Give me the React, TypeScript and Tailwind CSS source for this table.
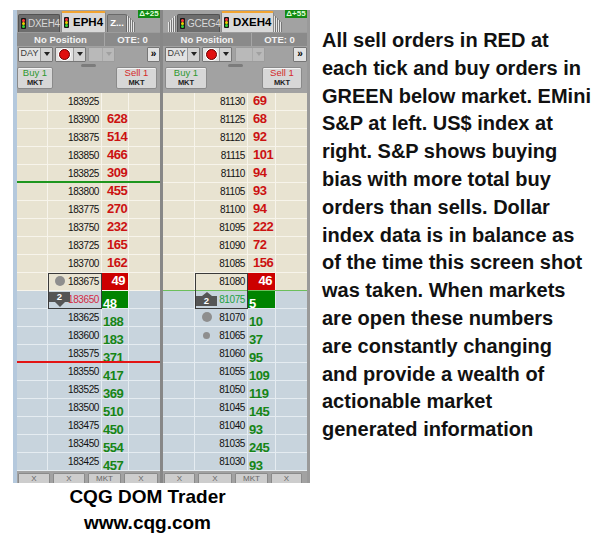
import React from "react";
import clsx from "clsx";

type Level = [string, string];

type Deco = {
  circle?: "lg" | "sm";
  badge?: "up" | "down";
  priceCls?: string;
  line?: string;
};

const ES: Level[] = [
  ["183925", ""],
  ["183900", "628"],
  ["183875", "514"],
  ["183850", "466"],
  ["183825", "309"],
  ["183800", "455"],
  ["183775", "270"],
  ["183750", "232"],
  ["183725", "165"],
  ["183700", "162"],
  ["183675", "49"],
  ["183650", "48"],
  ["183625", "188"],
  ["183600", "183"],
  ["183575", "371"],
  ["183550", "417"],
  ["183525", "369"],
  ["183500", "510"],
  ["183475", "450"],
  ["183450", "554"],
  ["183425", "457"],
];

const DX: Level[] = [
  ["81130", "69"],
  ["81125", "68"],
  ["81120", "92"],
  ["81115", "101"],
  ["81110", "94"],
  ["81105", "93"],
  ["81100", "94"],
  ["81095", "222"],
  ["81090", "72"],
  ["81085", "156"],
  ["81080", "46"],
  ["81075", "5"],
  ["81070", "10"],
  ["81065", "37"],
  ["81060", "95"],
  ["81055", "109"],
  ["81050", "119"],
  ["81045", "145"],
  ["81040", "93"],
  ["81035", "245"],
  ["81030", "93"],
];

const ES_DECO: Record<number, Deco> = {
  4: { line: "h-[2px] bg-[#1e961e]" },
  10: { circle: "lg" },
  11: { badge: "down", priceCls: "text-[#d42a44]" },
  14: { line: "h-[2px] bg-[#e31414]" },
};

const DX_DECO: Record<number, Deco> = {
  10: { line: "h-[1.5px] bg-[#6cbf5c]" },
  11: { badge: "up", priceCls: "text-[#23a043]" },
  12: { circle: "lg" },
  13: { circle: "sm" },
};

const NOTE = [
  "All sell orders in RED at",
  "each tick and buy orders in",
  "GREEN below market. EMini",
  "S&P at left. US$ index at",
  "right. S&P shows buying",
  "bias with more total buy",
  "orders than sells. Dollar",
  "index data is in balance as",
  "of the time this screen shot",
  "was taken. When markets",
  "are open these numbers",
  "are constantly changing",
  "and provide a wealth of",
  "actionable market",
  "generated information",
];

function Light() {
  return (
    <span className="flex h-[11px] w-[5px] shrink-0 flex-col items-center justify-between rounded-[1px] bg-[#161616] py-[1px]">
      <span className="h-[3px] w-[3px] rounded-full bg-[#ff3a3a]" />
      <span className="h-[3px] w-[3px] rounded-full bg-[#eed000]" />
      <span className="h-[3px] w-[3px] rounded-full bg-[#35d035]" />
    </span>
  );
}

function Tab({ label, active, w }: { label: string; active?: boolean; w: string }) {
  if (active) {
    return (
      <div
        className={clsx(
          w,
          "ml-[1px] flex h-[21px] items-center gap-[4px] rounded-t-[2px] border-x border-t-2 border-x-[#8a8a8a] border-t-[#f2a431] bg-[#d9d9d9] pl-[2px] text-[11.5px] font-bold text-black"
        )}
      >
        <Light />
        {label}
      </div>
    );
  }
  return (
    <div
      className={clsx(
        w,
        "ml-[1px] flex h-[18px] items-center gap-[2px] rounded-t-[2px] border border-b-0 border-[#525252] bg-[#6d6d6d] pl-[2px] text-[10px] tracking-[-0.3px] text-[#d8d8d8]"
      )}
    >
      <Light />
      {label}
    </div>
  );
}

function Stack({ up }: { up?: boolean }) {
  const hs = ["h-[16px]", "h-[14px]", "h-[12px]", "h-[10px]"];
  return (
    <div className="flex items-end">
      {(up ? [...hs].reverse() : hs).map((h, i) => (
        <span key={i} className={clsx("w-[2px] border-l border-[#e6e6e6] bg-[#777]", h)} />
      ))}
    </div>
  );
}

function Delta({ label }: { label: string }) {
  return (
    <div className="ml-auto flex h-[8px] w-[22px] items-center justify-center self-start overflow-hidden bg-[#138a13] text-[8px] font-bold leading-[8px] text-[#dfffd8]">
      {label}
    </div>
  );
}

function Dropdown({ w, children, disabled }: { w: string; children?: React.ReactNode; disabled?: boolean }) {
  return (
    <div
      className={clsx(
        w,
        "flex h-[15px] rounded-[1px] border",
        disabled ? "border-[#9c9c9c] bg-[#b9b9b9]" : "border-[#767676] bg-[#e2e2e2]"
      )}
    >
      <div className="flex flex-1 items-center justify-center">{children}</div>
      <div
        className={clsx(
          "flex w-[12px] items-center justify-center border-l",
          disabled ? "border-[#a9a9a9]" : "border-[#9a9a9a] bg-[#d2d2d2]"
        )}
      >
        <span
          className={clsx(
            "h-0 w-0 border-x-[3px] border-t-[4px] border-x-transparent",
            disabled ? "border-t-[#a0a0a0]" : "border-t-[#222]"
          )}
        />
      </div>
    </div>
  );
}

function OrderBtn({ buy, w }: { buy?: boolean; w: string }) {
  return (
    <div
      className={clsx(
        w,
        "flex h-[22px] flex-col items-center justify-center rounded-[2px] border border-[#8a8a8a] bg-[#d7d7d7] shadow-[inset_0_1px_0_#f4f4f4]"
      )}
    >
      <span className={clsx("text-[9.5px] leading-[10px]", buy ? "text-[#2f972f]" : "text-[#d42a2a]")}>
        {buy ? "Buy 1" : "Sell 1"}
      </span>
      <span className="text-[7.5px] font-bold leading-[9px] text-[#222]">MKT</span>
    </div>
  );
}

function OrderBadge({ up }: { up?: boolean }) {
  return (
    <span className="absolute left-[1px] top-[1px] flex w-[21px] flex-col items-center">
      {up && <span className="h-0 w-0 border-x-[5px] border-b-[4px] border-x-transparent border-b-[#555]" />}
      <span className="flex h-[10px] w-[21px] items-center justify-center bg-[#555] text-[9.5px] font-bold leading-none text-white">
        2
      </span>
      {!up && <span className="h-0 w-0 border-x-[5px] border-t-[5px] border-x-transparent border-t-[#555]" />}
    </span>
  );
}

function Ladder({ rows, deco, cols, box }: { rows: Level[]; deco: Record<number, Deco>; cols: string[]; box: string }) {
  return (
    <div className="relative">
      {rows.map(([price, size], i) => {
        const ask = i <= 10;
        const d = deco[i] ?? {};
        const grid = ask ? "border-[#f7f4eb]" : "border-[#e5ecf1]";
        const hiAsk = i === 10;
        const hiBid = i === 11;
        return (
          <div key={price} className={clsx("relative flex h-[18px]", ask ? "bg-[#e8e3d1]" : "bg-[#c8d4dd]")}>
            <div className={clsx(cols[0], "border-b border-r", grid)} />
            <div className={clsx(cols[1], "relative flex items-center justify-end border-b border-r pr-[2px]", grid)}>
              {d.circle === "lg" && (
                <span className="absolute left-[7px] top-[3px] h-[10px] w-[10px] rounded-full bg-[#8e8e8e]" />
              )}
              {d.circle === "sm" && (
                <span className="absolute left-[8px] top-[5px] h-[7px] w-[7px] rounded-full bg-[#8e8e8e]" />
              )}
              {d.badge && <OrderBadge up={d.badge === "up"} />}
              <span className={clsx("text-[10px] leading-none tracking-[-0.4px]", d.priceCls ?? "text-[#111]")}>
                {price}
              </span>
            </div>
            <div
              className={clsx(
                cols[2],
                "flex border-b border-r text-[13px] font-bold leading-[13px] tracking-[-0.5px]",
                grid,
                hiAsk && "items-start justify-end bg-[#cc0000] pr-[3px] text-white",
                hiBid && "items-end bg-[#008400] pl-[1px] text-white",
                !hiAsk && !hiBid && ask && "items-start pl-[5px] text-[#cc1111]",
                !hiAsk && !hiBid && !ask && "items-end pl-[1px] text-[#168516]"
              )}
            >
              <span className={ask ? "mt-[1px]" : "-mb-[2px]"}>{size}</span>
            </div>
            <div className={clsx(cols[3], "border-b", grid)} />
            {d.line && <div className={clsx("absolute bottom-0 left-0 right-0", d.line)} />}
          </div>
        );
      })}
      <div className={clsx("absolute top-[180px] h-[36px] border border-[#3a3a3a]", box)} />
    </div>
  );
}

function BottomBar({ widths }: { widths: string[] }) {
  const labels = ["X", "X", "MKT", "X"];
  return (
    <div className="flex h-[12px] gap-[3px] px-[1px] pt-[2px]">
      {labels.map((t, i) => (
        <div
          key={i}
          className={clsx(
            widths[i],
            "h-[16px] rounded-[1px] border border-[#8a8a8a] bg-[#cdcdcd] text-center text-[8px] leading-[10px] text-[#666]"
          )}
        >
          {t}
        </div>
      ))}
    </div>
  );
}

export default function App() {
  return (
    <div className="flex h-[550px] w-[600px] bg-white font-['Liberation_Sans',Arial,sans-serif]">
      <div className="flex w-[310px] flex-col">
        <div className="ml-[13px] mt-[10px] flex h-[473px] overflow-hidden bg-[#a2a2a2]">
          <div className="w-[4px] bg-[#b5c9dd]" />

          {/* EMini S&P */}
          <div className="flex w-[143px] flex-col">
            <div className="flex h-[23px] items-end">
              <Tab label="DXEH4" w="w-[42px]" />
              <Tab label="EPH4" active w="w-[45px]" />
              <div className="ml-[1px] flex h-[18px] w-[20px] items-center justify-center rounded-t-[2px] border border-b-0 border-[#6a6a6a] bg-[#8e8e8e] text-[9.5px] font-bold text-white">
                Z...
              </div>
              <Stack />
              <Delta label="Δ+25" />
            </div>
            <div className="flex h-[14px] border-t border-[#9c9c9c] bg-[#8a8a8a] text-[9.5px] font-bold leading-[13px] text-[#f2f2f2]">
              <div className="w-[87px] text-center">No Position</div>
              <div className="w-[1px] bg-[#a6a6a6]" />
              <div className="flex-1 text-center">OTE: 0</div>
            </div>
            <div className="flex h-[18px] items-center pl-[1px]">
              <Dropdown w="w-[35px]">
                <span className="text-[9px] text-[#3a3a3a]">DAY</span>
              </Dropdown>
              <div className="ml-[2px]">
                <Dropdown w="w-[31px]">
                  <span className="h-[11px] w-[11px] rounded-full border border-[#6a0000] bg-[#e01010] ring-1 ring-white" />
                </Dropdown>
              </div>
              <div className="ml-[2px]">
                <Dropdown w="w-[27px]" disabled />
              </div>
              <div className="ml-auto flex h-[15px] w-[13px] items-center justify-center rounded-[1px] border border-[#767676] bg-[#e2e2e2] text-[10px] font-bold leading-none">
                »
              </div>
            </div>
            <div className="flex h-[4px] justify-center">
              <span className="mt-[1px] h-[3px] w-[15px] rounded-full bg-[#7c7c7c]" />
            </div>
            <div className="flex h-[24px] items-center justify-between pr-[3px]">
              <OrderBtn buy w="w-[36px]" />
              <OrderBtn w="w-[41px]" />
            </div>
            <div className="h-[4px]" />
            <Ladder
              rows={ES}
              deco={ES_DECO}
              cols={["w-[31px]", "w-[54px]", "w-[27px]", "w-[31px]"]}
              box="left-[31px] w-[54px]"
            />
            <BottomBar widths={["w-[32px]", "w-[32px]", "w-[33px]", "w-[34px]"]} />
          </div>

          <div className="w-[3px] bg-[#878787]" />

          {/* US Dollar index */}
          <div className="flex w-[144px] flex-col">
            <div className="flex h-[23px] items-end pl-[5px]">
              <Stack up />
              <Tab label="GCEG4" w="w-[43px]" />
              <Tab label="DXEH4" active w="w-[53px]" />
              <Stack />
              <Delta label="Δ+55" />
            </div>
            <div className="flex h-[14px] border-t border-[#9c9c9c] bg-[#8a8a8a] text-[9.5px] font-bold leading-[13px] text-[#f2f2f2]">
              <div className="w-[88px] text-center">No Position</div>
              <div className="w-[1px] bg-[#a6a6a6]" />
              <div className="flex-1 text-center">OTE: 0</div>
            </div>
            <div className="flex h-[18px] items-center pl-[2px]">
              <Dropdown w="w-[35px]">
                <span className="text-[9px] text-[#3a3a3a]">DAY</span>
              </Dropdown>
              <div className="ml-[2px]">
                <Dropdown w="w-[30px]">
                  <span className="h-[11px] w-[11px] rounded-full border border-[#6a0000] bg-[#e01010] ring-1 ring-white" />
                </Dropdown>
              </div>
              <div className="ml-[3px]">
                <Dropdown w="w-[30px]" disabled />
              </div>
              <div className="ml-auto flex h-[15px] w-[14px] items-center justify-center rounded-[1px] border border-[#767676] bg-[#e2e2e2] text-[10px] font-bold leading-none">
                »
              </div>
            </div>
            <div className="flex h-[4px] justify-center">
              <span className="mt-[1px] h-[3px] w-[15px] rounded-full bg-[#7c7c7c]" />
            </div>
            <div className="flex h-[24px] items-center justify-between pl-[2px] pr-[5px]">
              <OrderBtn buy w="w-[42px]" />
              <OrderBtn w="w-[40px]" />
            </div>
            <div className="h-[4px]" />
            <Ladder
              rows={DX}
              deco={DX_DECO}
              cols={["w-[32px]", "w-[53px]", "w-[28px]", "w-[31px]"]}
              box="left-[32px] w-[53px]"
            />
            <BottomBar widths={["w-[31px]", "w-[34px]", "w-[33px]", "w-[31px]"]} />
          </div>

          <div className="w-[3px] bg-[#9a9a9a]" />
        </div>

        <div className="mt-[1px] w-[295px] text-center text-[19px] font-bold leading-[26px] text-black">
          <div>CQG DOM Trader</div>
          <div>www.cqg.com</div>
        </div>
      </div>

      <div className="pl-[12px] pt-[27px] text-[20px] font-bold leading-[27.8px] text-[#111]">
        {NOTE.map((line) => (
          <div key={line} className="whitespace-nowrap">
            {line}
          </div>
        ))}
      </div>
    </div>
  );
}
